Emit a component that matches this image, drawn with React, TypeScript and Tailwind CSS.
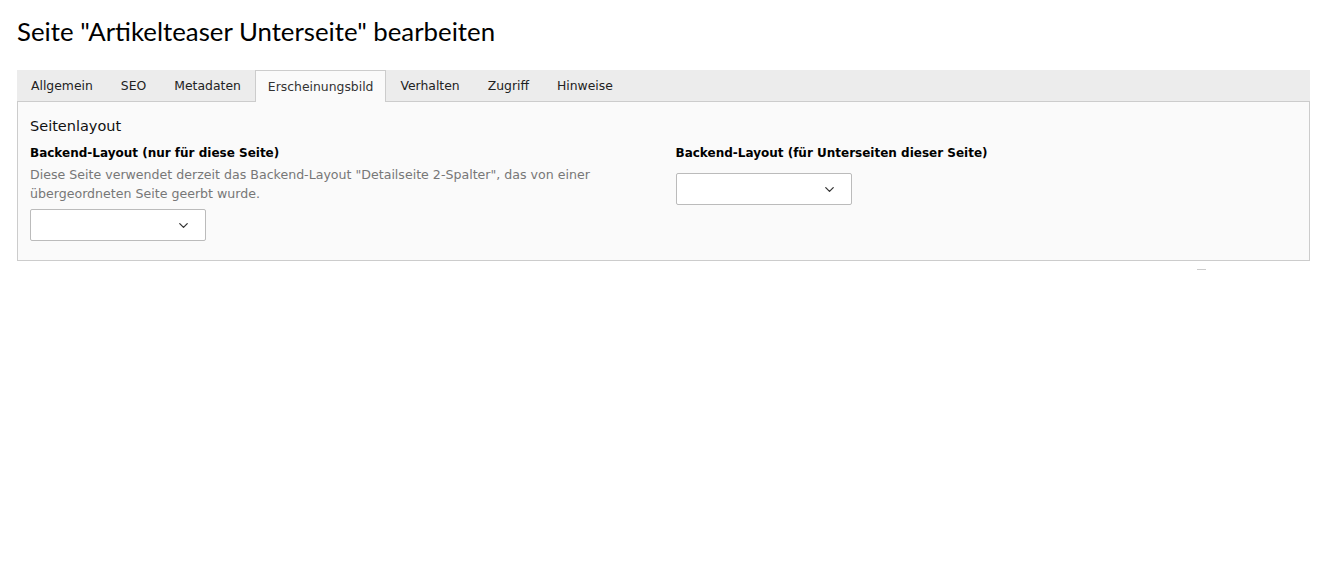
import { ChevronDown } from "lucide-react";

const TABS = ["Allgemein", "SEO", "Metadaten", "Erscheinungsbild", "Verhalten", "Zugriff", "Hinweise"];
const ACTIVE = "Erscheinungsbild";

const VERDANA = { fontFamily: '"DejaVu Sans", Verdana, sans-serif' };

export default function App() {
  return (
    <div className="min-h-[577px] bg-white px-[17px] pt-[15px] text-[#111]" style={VERDANA}>
      <h1 className="mb-[23px] text-[25.8px] leading-[32px] text-black" style={{ fontFamily: 'Lato, "Noto Sans", sans-serif' }}>
        Seite "Artikelteaser Unterseite" bearbeiten
      </h1>

      <div className="flex h-[31px] items-end bg-[#ececec]">
        {TABS.map((t) => (
          <div
            key={t}
            className={
              t === ACTIVE
                ? "relative -mb-px flex h-[32px] items-center border border-b-0 border-[#ccc] bg-[#fafafa] px-[12px] pt-[2px] text-[12.4px] text-[#333]"
                : "flex h-[31px] items-center border border-transparent px-[13px] pt-[2px] text-[12.4px] text-[#222]"
            }
          >
            {t}
          </div>
        ))}
      </div>

      <div className="border border-[#ccc] bg-[#fafafa] px-[12px] pb-[19px] pt-[14px]">
        <h2 className="mb-[9px] text-[14.5px] leading-[20px] text-[#111]">Seitenlayout</h2>
        <div className="grid grid-cols-2 gap-[24px]">
          <div>
            <Label text="Backend-Layout (nur für diese Seite)" />
            <p className="mb-[6px] text-[12.6px] leading-[19px] text-[#777]">
              Diese Seite verwendet derzeit das Backend-Layout "Detailseite 2-Spalter", das von einer übergeordneten Seite geerbt wurde.
            </p>
            <Select />
          </div>
          <div>
            <Label text="Backend-Layout (für Unterseiten dieser Seite)" />
            <div className="pt-[8px]">
              <Select />
            </div>
          </div>
        </div>
      </div>

      <div className="flex justify-end pr-[104px] pt-[8px]">
        <div className="h-px w-[9px] bg-[#ccc]" />
      </div>
    </div>
  );
}

function Label({ text }: { text: string }) {
  return <div className="mb-[4px] text-[12px] font-bold leading-[16px] text-black">{text}</div>;
}

function Select() {
  return (
    <div className="flex h-[32px] w-[176px] items-center justify-end rounded-[2px] border border-[#bbb] bg-white pr-[14px]">
      <ChevronDown size={15} strokeWidth={2} className="text-[#333]" />
    </div>
  );
}
